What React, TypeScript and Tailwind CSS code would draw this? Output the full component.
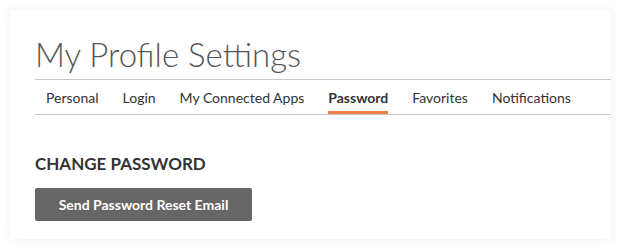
export default function App() {
  const tabs = ['Personal', 'Login', 'My Connected Apps', 'Password', 'Favorites', 'Notifications'];
  const active = 'Password';

  return (
    <div className="min-h-[249px] w-[621px] bg-white p-[10px] font-['Lato','Liberation_Sans',sans-serif]">
      <div className="h-[229px] bg-white pl-[25px] pt-[26px] shadow-[0_0_8px_rgba(0,0,0,0.07)]">
        <h1 className="h-[43px] text-[33px] font-light leading-[36px] text-[#555]">
          My Profile Settings
        </h1>
        <nav className="flex h-[36px] items-stretch border-y border-[#c8c8c8] pl-[11px]">
          {tabs.map(tab => (
            <span
              key={tab}
              className={
                tab === active
                  ? 'mr-[24px] flex items-center border-b-[3px] border-[#ec7d44] pt-[4px] text-[14px] font-bold text-[#333]'
                  : 'mr-[24px] flex items-center text-[14px] text-[#333]'
              }
            >
              {tab}
            </span>
          ))}
        </nav>
        <h2 className="mt-[39px] text-[17px] font-bold leading-[20px] text-[#333]">CHANGE PASSWORD</h2>
        <button className="mt-[14px] h-[33px] w-[217px] rounded-[2px] bg-[#666] text-[14px] font-bold text-white">
          Send Password Reset Email
        </button>
      </div>
    </div>
  );
}
